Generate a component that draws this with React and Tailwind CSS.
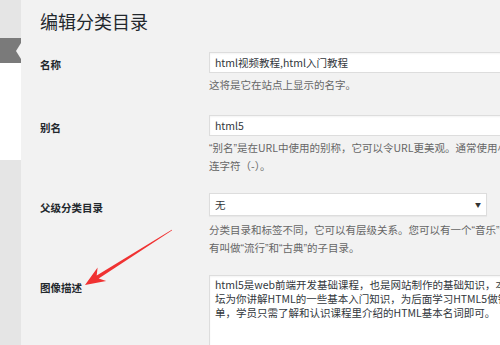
const Q = ({ children }) => <span className="font-['Liberation_Sans',sans-serif]">{children}</span>;

export default function App() {
  return (
    <div className="relative flex h-[345px] w-[500px] overflow-hidden bg-[#f2f2f2] font-['Noto_Sans_CJK_SC',sans-serif]">
      <aside className="flex w-[21px] shrink-0 flex-col">
        <div className="h-[38px] bg-[#e5e5e5]" />
        <div className="relative h-[25px] bg-[#7a7a7a]">
          <span className="absolute right-0 top-[5px] h-0 w-0 border-y-[8px] border-r-[5px] border-y-transparent border-r-[#f2f2f2]" />
        </div>
        <div className="h-[97px] bg-white" />
        <div className="flex-1 bg-[#e5e5e5]" />
      </aside>

      <main className="min-w-0 flex-1 overflow-hidden pl-[19px]">
        <h1 className="h-[52px] whitespace-nowrap pt-[9px] text-[18px] font-normal leading-[24px] text-[#23282d]">
          编辑分类目录
        </h1>

        <div className="flex">
          <div className="w-[169px] shrink-0 pt-[6px] text-[10.5px] font-bold leading-[14px] text-[#23282d]">名称</div>
          <div className="min-w-0 flex-1">
            <div className="flex h-[21px] w-[320px] items-center border border-[#dddddd] bg-white pl-[5px] text-[10.5px] text-[#32373c] shadow-[inset_0_1px_2px_rgba(0,0,0,0.05)]">
              html视频教程,html入门教程
            </div>
            <p className="mt-[3px] whitespace-nowrap text-[10.5px] leading-[18px] text-[#666]">这将是它在站点上显示的名字。</p>
          </div>
        </div>

        <div className="mt-[21px] flex">
          <div className="w-[169px] shrink-0 pt-[6px] text-[10.5px] font-bold leading-[14px] text-[#23282d]">别名</div>
          <div className="min-w-0 flex-1">
            <div className="flex h-[21px] w-[320px] items-center border border-[#dddddd] bg-white pl-[5px] text-[10.5px] text-[#32373c] shadow-[inset_0_1px_2px_rgba(0,0,0,0.05)]">
              html5
            </div>
            <p className="mt-[3px] whitespace-nowrap text-[10.5px] leading-[18px] text-[#666]">
              <Q>“</Q>别名<Q>”</Q>是在URL中使用的别称，它可以令URL更美观。通常使用小写，只能包含字母，数字和
            </p>
            <p className="whitespace-nowrap text-[10.5px] leading-[18px] text-[#666]">连字符（-）。</p>
          </div>
        </div>

        <div className="mt-[18px] flex">
          <div className="w-[169px] shrink-0 pt-[8px] text-[10.5px] font-bold leading-[14px] text-[#23282d]">父级分类目录</div>
          <div className="min-w-0 flex-1">
            <div className="flex h-[23px] w-[278px] items-center justify-between border border-[#dddddd] bg-white pl-[5px] pr-[5px] text-[10.5px] text-[#32373c] shadow-[0_1px_1px_rgba(0,0,0,0.04)]">
              <span>无</span>
              <span className="text-[6px] text-[#333]">▼</span>
            </div>
            <p className="mt-[5px] whitespace-nowrap text-[10.5px] leading-[18px] text-[#666]">
              分类目录和标签不同，它可以有层级关系。您可以有一个<Q>“</Q>音乐<Q>”</Q>分类目录，在该目录下可以
            </p>
            <p className="whitespace-nowrap text-[10.5px] leading-[18px] text-[#666]">
              有叫做<Q>“</Q>流行<Q>”</Q>和<Q>“</Q>古典<Q>”</Q>的子目录。
            </p>
          </div>
        </div>

        <div className="mt-[18px] flex">
          <div className="w-[169px] shrink-0 pt-[6px] text-[10.5px] font-bold leading-[14px] text-[#23282d]">图像描述</div>
          <div className="min-w-0 flex-1">
            <div className="h-[100px] w-[320px] border border-[#dddddd] bg-white pl-[5px] pt-[2px] text-[10.5px] leading-[14px] text-[#32373c] shadow-[inset_0_1px_2px_rgba(0,0,0,0.05)]">
              <p className="whitespace-nowrap">html5是web前端开发基础课程，也是网站制作的基础知识，本论</p>
              <p className="whitespace-nowrap">坛为你讲解HTML的一些基本入门知识，为后面学习HTML5做铺垫，课程简</p>
              <p className="whitespace-nowrap">单，学员只需了解和认识课程里介绍的HTML基本名词即可。</p>
            </div>
          </div>
        </div>
      </main>

      <svg className="pointer-events-none absolute left-0 top-0" width="500" height="345" viewBox="0 0 500 345">
        <polygon
          points="171.8,229.7 172.2,230.3 98.7,278.5 106.2,281.1 85,285 97.6,267.5 96.7,275.5"
          fill="#f03232"
        />
      </svg>
    </div>
  );
}
